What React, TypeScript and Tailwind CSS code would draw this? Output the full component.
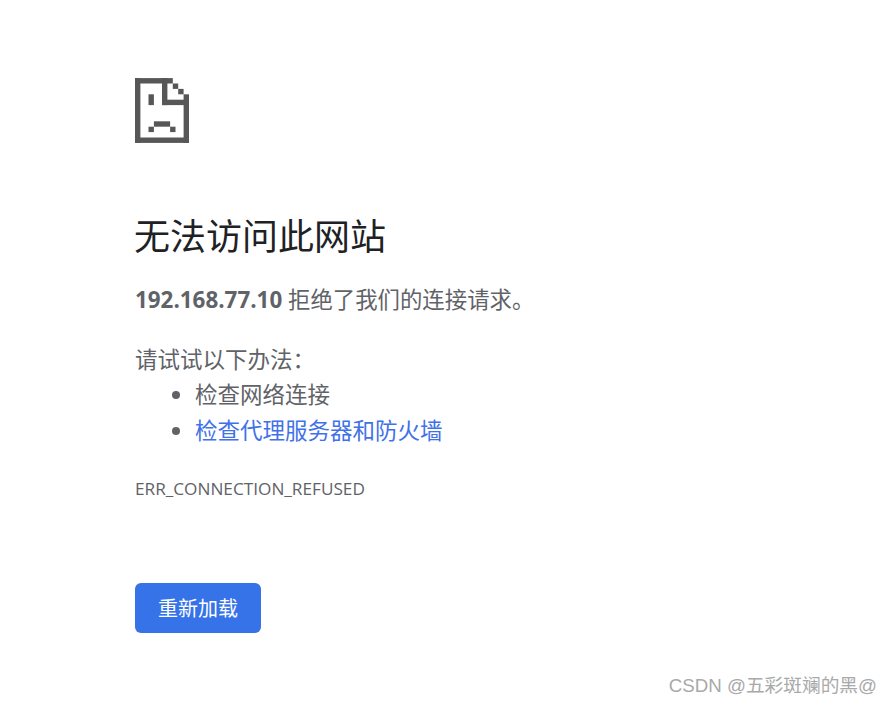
const font = "font-['Open_Sans','Noto_Sans_CJK_SC',sans-serif]";

function SadPage() {
  const rects: [number, number, number, number][] = [
    [0, 0, 7, 1], [0, 0, 1, 12], [0, 11, 10, 1], [9, 3, 1, 9],
    [5, 0, 1, 5], [5, 4, 5, 1], [7, 1, 1, 1], [8, 2, 1, 1],
    [2.5, 3, 1, 2], [3.5, 8, 3, 1], [2.5, 9, 1, 1], [6.5, 9, 1, 1],
  ];
  return (
    <svg width="54" height="65" viewBox="0 0 10 12" className="block">
      {rects.map(([x, y, w, h], i) => (
        <rect key={i} x={x} y={y} width={w} height={h} fill="#575757" />
      ))}
    </svg>
  );
}

export default function App() {
  return (
    <div className={`relative w-[892px] h-[706px] overflow-hidden bg-white pl-[135px] pt-[78px] text-[#5f6368] ${font}`}>
      <SadPage />
      <h1 className="mt-[70px] -ml-px text-[36px] leading-[48px] font-normal text-[#202124]">无法访问此网站</h1>
      <p className="mt-[21px] text-[22.4px] leading-[36px]">
        <span className="font-bold">192.168.77.10</span> 拒绝了我们的连接请求。
      </p>
      <p className="mt-[24px] text-[22.5px] leading-[35px]">请试试以下办法：</p>
      <ul className="text-[22.5px] leading-[36px] list-disc pl-[60px] marker:text-[#5f6368]">
        <li>检查网络连接</li>
        <li className="text-[#4171e8]">检查代理服务器和防火墙</li>
      </ul>
      <p className="mt-[28px] text-[17.2px] leading-[24px]">ERR_CONNECTION_REFUSED</p>
      <button className="mt-[82px] flex h-[50px] w-[126px] items-center justify-center rounded-[6px] bg-[#3673e8] pt-[2px] text-[20px] text-white">
        重新加载
      </button>
      <div className="absolute right-[15px] top-[674px] text-[18.7px] leading-[24px] text-[#a9a9a9] font-['Liberation_Sans','Noto_Sans_CJK_SC',sans-serif]">
        CSDN @五彩斑斓的黑@
      </div>
    </div>
  );
}
